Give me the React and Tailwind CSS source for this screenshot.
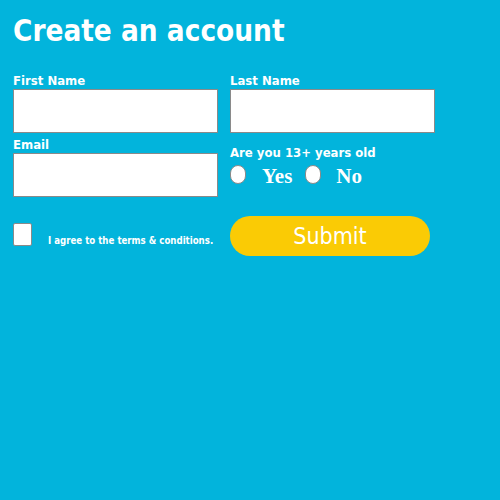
import React from "react";

const App = () => {
  return (
    <div className="min-h-[500px] w-[500px] bg-[#02b4dc] px-[13px] pt-[12px] font-['DejaVu_Sans_Condensed','DejaVu_Sans',sans-serif] text-white">
      <h1 className="text-[29.4px] font-bold leading-[38px]">Create an account</h1>

      <div className="mt-[23px] grid grid-cols-[205px_205px] gap-x-[12px]">
        <div className="flex flex-col">
          <label className="text-[13px] font-bold leading-[16px]">First Name</label>
          <input className="h-[44px] w-[205px] border border-[#8a8a8a] bg-white" />
        </div>
        <div className="flex flex-col">
          <label className="text-[13px] font-bold leading-[16px]">Last Name</label>
          <input className="h-[44px] w-[205px] border border-[#8a8a8a] bg-white" />
        </div>

        <div className="mt-[4px] flex flex-col">
          <label className="text-[13px] font-bold leading-[16px]">Email</label>
          <input className="h-[44px] w-[205px] border border-[#8a8a8a] bg-white" />
        </div>
        <div className="mt-[12px] flex flex-col">
          <span className="text-[13px] font-bold leading-[16px]">Are you 13+ years old</span>
          <div className="flex items-center">
            <span className="h-[19px] w-[16px] rounded-full border border-[#8a8a8a] bg-white" />
            <span className="ml-[16px] mt-[3px] font-['Liberation_Serif',serif] text-[21px] font-bold leading-[24px]">Yes</span>
            <span className="ml-[13px] h-[19px] w-[16px] rounded-full border border-[#8a8a8a] bg-white" />
            <span className="ml-[15px] mt-[3px] font-['Liberation_Serif',serif] text-[21px] font-bold leading-[24px]">No</span>
          </div>
        </div>

        <div className="mt-[26px] flex items-end self-start">
          <span className="h-[23px] w-[19px] shrink-0 rounded-[2px] border border-[#8a8a8a] bg-white" />
          <span className="mb-[-1px] ml-[16px] whitespace-nowrap text-[9.6px] font-bold leading-[12px]">I agree to the terms &amp; conditions.</span>
        </div>
        <div className="mt-[19px]">
          <button className="h-[40px] w-[200px] rounded-full bg-[#facb05] text-[23px] leading-[40px] text-white">
            Submit
          </button>
        </div>
      </div>
    </div>
  );
};

export default App;
